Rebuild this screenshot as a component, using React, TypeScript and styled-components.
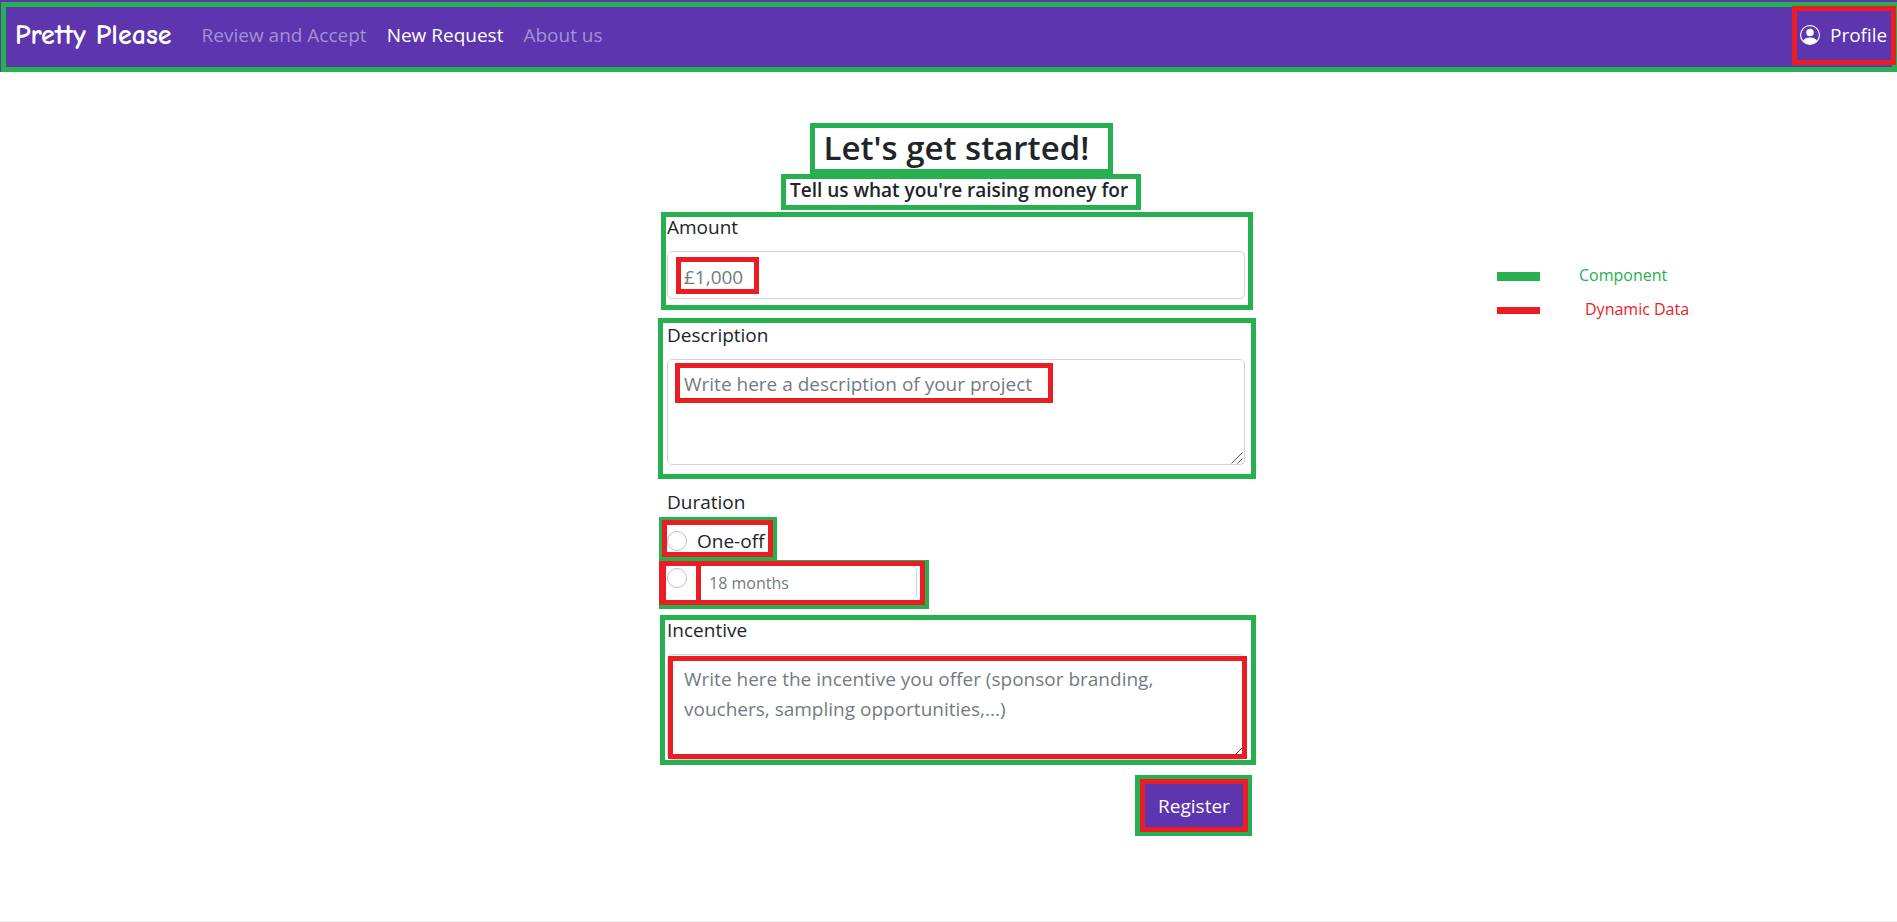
import React from "react";
import styled, { createGlobalStyle, css } from "styled-components";
import { BsPersonCircle } from "react-icons/bs";

const green = "#26b050";
const red = "#ea1d25";
const purple = "#5c35af";
const sans = '"Segoe UI", "Open Sans", "Noto Sans", sans-serif';

const GlobalStyle = createGlobalStyle`
  *, *::before, *::after { box-sizing: border-box; }
  body { margin: 0; background: #fff; color: #212529; font: 400 19px/30px ${sans}; }
  input, textarea, button { font: inherit; color: inherit; margin: 0; }
`;

const Page = styled.div`
  display: flex;
  flex-direction: column;
  min-height: 100vh;
  border-bottom: 1px solid #efefef;
`;

const Header = styled.header`
  background: ${purple};
  padding: 2px 0 0 1px;
`;

const NavFrame = styled.nav`
  display: flex;
  align-items: center;
  height: 70px;
  border: 5px solid ${green};
  padding: 0 0 4px 9px;
`;

const Brand = styled.a`
  color: #fff;
  font: 600 28px/32px "Comic Sans MS", "Comic Neue", cursive, ${sans};
  text-decoration: none;
  margin-right: 30px;
`;

const NavList = styled.ul`
  display: flex;
  gap: 20px;
  list-style: none;
  margin: 0;
  padding: 0;
`;

const NavLink = styled.a<{ $active?: boolean }>`
  color: ${(p) => (p.$active ? "#fff" : "#a58fd3")};
  text-decoration: none;
`;

const ProfileLink = styled.a`
  display: flex;
  align-items: center;
  align-self: flex-start;
  gap: 10px;
  width: 104px;
  height: 59px;
  margin: -1px -4px 0 auto;
  padding: 0 0 2px 3px;
  border: 5px solid ${red};
  color: #fff;
  text-decoration: none;
`;

const Main = styled.main`
  display: grid;
  grid-template-columns: 1fr 598px 1fr;
  padding: 51px 0 0 17px;
`;

const Column = styled.div`
  grid-column: 2;
`;

const Headings = styled.div`
  display: flex;
  flex-direction: column;
  align-items: center;
  padding-left: 8px;
  margin-bottom: 2px;
`;

const Title = styled.h1`
  width: 303px;
  margin: 0;
  padding: 0 0 2px 9px;
  border: 5px solid ${green};
  font-size: 33px;
  font-weight: 600;
  line-height: 39px;
`;

const Subtitle = styled.h2`
  width: 360px;
  margin: 0;
  padding: 0 0 4px 4px;
  border: 5px solid ${green};
  font-size: 19px;
  font-weight: 600;
  line-height: 22px;
  white-space: nowrap;
`;

const Field = styled.div<{ $inset?: string; $pad?: string }>`
  margin: ${(p) => p.$inset ?? "0"};
  padding: ${(p) => p.$pad ?? "0"};
  border: 5px solid ${green};
`;

const labelText = css`
  display: block;
  line-height: 20px;
`;

const Label = styled.label`
  ${labelText}
  margin-bottom: 14px;
`;

const ControlWrap = styled.div`
  position: relative;
`;

const control = css`
  display: block;
  width: 100%;
  border: 1px solid #ced4da;
  border-radius: 5px;
  background: #fff;
  outline: none;
  &::placeholder { color: #737b83; opacity: 1; }
`;

const TextInput = styled.input`
  ${control}
  height: 48px;
  padding: 3px 16px 0;
`;

const TextArea = styled.textarea`
  ${control}
  height: 106px;
  padding: 9px 16px;
  resize: none;
`;

const GripIcon = styled.svg`
  position: absolute;
  right: 2px;
  bottom: 1px;
  pointer-events: none;
`;

const Grip = () => (
  <GripIcon width="12" height="12" viewBox="0 0 12 12" fill="none" stroke="#555" aria-hidden="true">
    <path d="M0.5 11.5 L11.5 0.5 M6.5 11.5 L11.5 6.5" />
  </GripIcon>
);

const DataMark = styled.span<{ $inset: string; $size?: string }>`
  position: absolute;
  inset: ${(p) => p.$inset};
  ${(p) => p.$size}
  border: 5px solid ${red};
  pointer-events: none;
`;

const Duration = styled.fieldset`
  display: flex;
  flex-direction: column;
  align-items: flex-start;
  margin: 13px 0 6px 1px;
  padding: 0;
  border: 0;
`;

const Legend = styled.legend`
  ${labelText}
  padding: 0 0 0 8px;
  margin-bottom: 5px;
`;

const OptionFrame = styled.div`
  border: solid ${green};
  border-width: 3px 4px 3px 3px;
`;

const OptionLabel = styled.label`
  display: flex;
  align-items: center;
  gap: 10px;
  width: 111px;
  height: 37px;
  padding-top: 4px;
  border: 5px solid ${red};
  white-space: nowrap;
`;

const Radio = styled.input`
  appearance: none;
  flex: none;
  width: 20px;
  height: 20px;
  border: 1px solid #bfbfbf;
  border-radius: 50%;
  background: #fff;
  &:checked { border: 6px solid ${purple}; }
`;

const MonthsFrame = styled.div`
  display: flex;
  border: solid ${green};
  border-width: 1px 4px 4px 0;
`;

const RadioCell = styled.div`
  display: flex;
  width: 42px;
  height: 44px;
  padding: 2px 0 0 1px;
  border: solid ${red};
  border-width: 5px 5px 5px 7px;
`;

const MonthsCell = styled.div`
  width: 224px;
  height: 44px;
  padding-right: 3px;
  border: 5px solid ${red};
  border-left: 0;
`;

const MonthsInput = styled.input`
  ${control}
  height: 34px;
  padding: 0 8px;
  border-width: 0 1px 0 0;
  border-radius: 0 5px 5px 0;
  font-size: 16px;
`;

const Actions = styled.div`
  display: flex;
  justify-content: flex-end;
  margin: 10px 4px 0 0;
`;

const ButtonFrame = styled.div`
  border: solid ${green};
  border-width: 4px 4px 4px 5px;
`;

const RegisterButton = styled.button`
  display: block;
  width: 108px;
  height: 53px;
  padding: 0;
  border: 5px solid ${red};
  background: ${purple};
  color: #fff;
`;

const Key = styled.ul`
  list-style: none;
  margin: 135px 0 0 241px;
  padding: 0;
`;

const KeyItem = styled.li<{ $color: string; $gap: number }>`
  display: flex;
  align-items: center;
  gap: ${(p) => p.$gap}px;
  height: 34px;
  color: ${(p) => p.$color};
  font-size: 16px;
`;

const Swatch = styled.span<{ $thick: number }>`
  width: 43px;
  height: ${(p) => p.$thick}px;
  margin-top: 3px;
  background: currentColor;
`;

export default function App() {
  return (
    <Page>
      <GlobalStyle />
      <Header>
        <NavFrame>
          <Brand href="#">Pretty Please</Brand>
          <NavList>
            <li><NavLink href="#review">Review and Accept</NavLink></li>
            <li><NavLink href="#new" $active>New Request</NavLink></li>
            <li><NavLink href="#about">About us</NavLink></li>
          </NavList>
          <ProfileLink href="#profile">
            <BsPersonCircle size={20} />
            Profile
          </ProfileLink>
        </NavFrame>
      </Header>
      <Main>
        <Column>
          <Headings>
            <Title>Let's get started!</Title>
            <Subtitle>Tell us what you're raising money for</Subtitle>
          </Headings>
          <form onSubmit={(e) => e.preventDefault()}>
            <Field $inset="0 3px 8px" $pad="0 3px 6px 1px">
              <Label htmlFor="amount">Amount</Label>
              <ControlWrap>
                <TextInput id="amount" placeholder="£1,000" />
                <DataMark $inset="6px auto 5px 9px" $size="width: 83px;" />
              </ControlWrap>
            </Field>
            <Field $pad="2px 6px 9px 4px">
              <Label htmlFor="description">Description</Label>
              <ControlWrap>
                <TextArea id="description" placeholder="Write here a description of your project" />
                <Grip />
                <DataMark $inset="4px auto auto 8px" $size="width: 378px; height: 40px;" />
              </ControlWrap>
            </Field>
            <Duration>
              <Legend>Duration</Legend>
              <OptionFrame>
                <OptionLabel>
                  <Radio type="radio" name="duration" value="once" />
                  One-off
                </OptionLabel>
              </OptionFrame>
              <MonthsFrame>
                <RadioCell>
                  <Radio type="radio" name="duration" value="months" aria-label="Number of months" />
                </RadioCell>
                <MonthsCell>
                  <MonthsInput placeholder="18 months" aria-label="Months" />
                </MonthsCell>
              </MonthsFrame>
            </Duration>
            <Field $inset="0 0 0 2px" $pad="0 6px 0 2px">
              <Label htmlFor="incentive">Incentive</Label>
              <ControlWrap>
                <TextArea
                  id="incentive"
                  placeholder="Write here the incentive you offer (sponsor branding, vouchers, sampling opportunities,...)"
                />
                <Grip />
                <DataMark $inset="2px -2px 1px 1px" />
              </ControlWrap>
            </Field>
            <Actions>
              <ButtonFrame>
                <RegisterButton type="submit">Register</RegisterButton>
              </ButtonFrame>
            </Actions>
          </form>
        </Column>
        <Key>
          <KeyItem $color={green} $gap={39}>
            <Swatch $thick={9} />
            Component
          </KeyItem>
          <KeyItem $color={red} $gap={45}>
            <Swatch $thick={7} />
            Dynamic Data
          </KeyItem>
        </Key>
      </Main>
    </Page>
  );
}
